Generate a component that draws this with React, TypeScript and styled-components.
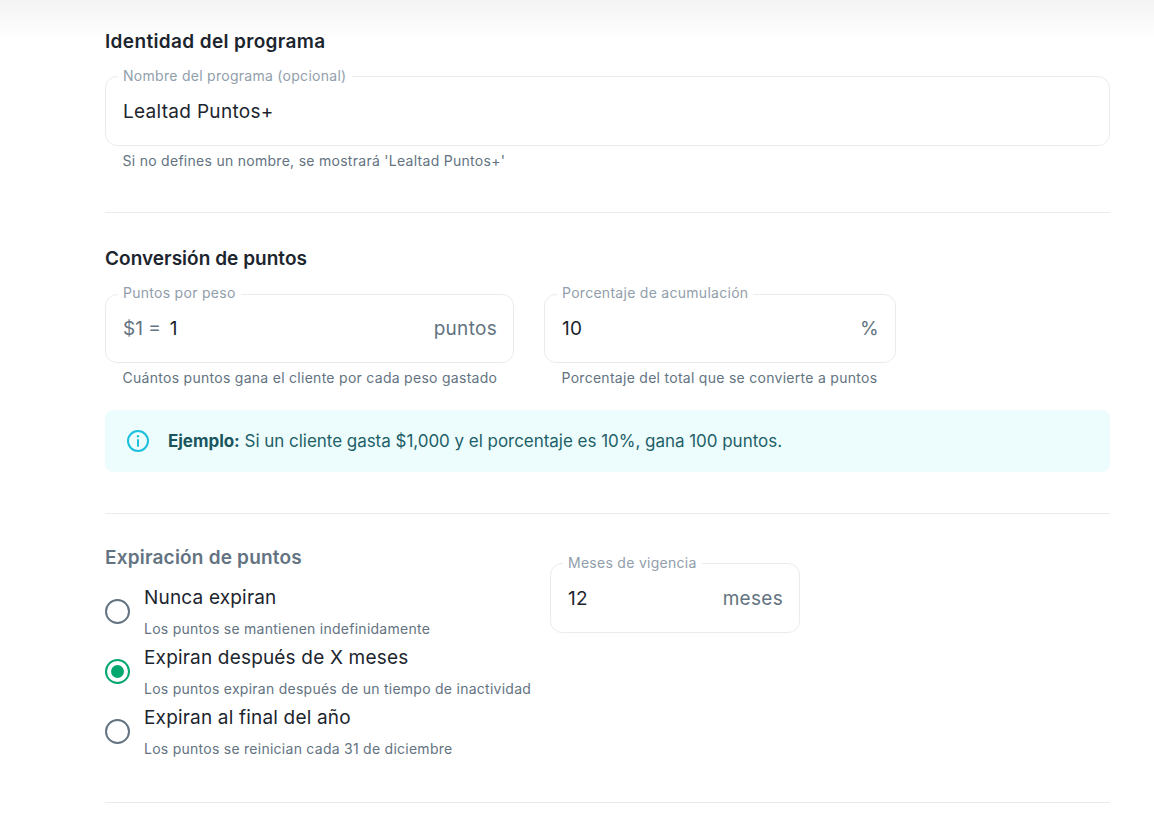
import React from "react";
import styled, { createGlobalStyle } from "styled-components";

const Global = createGlobalStyle`
  html, body { margin: 0; padding: 0; background: #fff; }
  body { font-family: Inter, "Noto Sans", "Liberation Sans", sans-serif; color: #1c252e; }
  * { box-sizing: border-box; }
`;

const Page = styled.main`
  position: relative;
  height: 827px;
  overflow: hidden;
  padding: 30px 44px 0 105px;
`;
const TopShade = styled.div`
  position: absolute;
  inset: 0 0 auto 0;
  height: 40px;
  background: linear-gradient(180deg, #f4f4f5 0%, #ffffff 100%);
`;
const Section = styled.section<{ $h: number; $gap?: number }>`
  position: relative;
  height: ${(p) => p.$h}px;
  border-bottom: 1px solid #e9ecef;
  margin-bottom: ${(p) => p.$gap ?? 0}px;
`;
const Title = styled.h2<{ $muted?: boolean; $ls?: number }>`
  margin: 0 0 -2px;
  font-size: 19px;
  line-height: 24px;
  font-weight: 600;
  letter-spacing: ${(p) => p.$ls ?? 0}px;
  color: ${(p) => (p.$muted ? "#637381" : "#1c252e")};
`;
const FieldBox = styled.div<{ $w?: number; $h?: number }>`
  position: relative;
  height: ${(p) => p.$h ?? 70}px;
  width: ${(p) => (p.$w ? `${p.$w}px` : "100%")};
  border: 1px solid #e9ecef;
  border-radius: 12px;
  padding: 0 16px 0 17px;
  display: flex;
  align-items: center;
  font-size: 19px;
  letter-spacing: 0.3px;
  color: #1c252e;
`;
const Legend = styled.span`
  position: absolute;
  top: -9px;
  left: 12px;
  padding: 0 5px;
  background: #fff;
  font-size: 14px;
  line-height: 16px;
  letter-spacing: 0.28px;
  color: #919eab;
`;
const Value = styled.span`
  flex: 1;
`;
const Adorn = styled.span`
  color: #637381;
`;
const Prefix = styled(Adorn)`
  margin-right: 9px;
  letter-spacing: 0;
`;
const Helper = styled.p`
  margin: 6px 0 0;
  padding-left: 17.5px;
  font-size: 14px;
  line-height: 18px;
  letter-spacing: 0.28px;
  color: #637381;
`;
const IdentityField = styled.div`
  margin-top: 24px;
`;
const ConvRow = styled.div`
  display: flex;
  gap: 30px;
  margin-top: 25px;
  ${Legend} {
    top: -10px;
  }
`;
const Alert = styled.div`
  display: flex;
  align-items: center;
  gap: 18px;
  margin-top: 23px;
  height: 62px;
  padding-left: 21px;
  background: #edfdfd;
  border-radius: 8px;
  font-size: 17px;
  letter-spacing: -0.03px;
  color: #1d6068;
  b {
    font-weight: 700;
    color: #1a555e;
  }
`;
const ExpiryRow = styled.div`
  display: flex;
  padding-top: 32px;
`;
const RadioCol = styled.div`
  width: 445px;
`;
const Options = styled.div`
  margin-top: 18px;
`;
const Option = styled.div`
  height: 60px;
  display: flex;
  align-items: flex-start;
  gap: 14px;
`;
const Radio = styled.span<{ $on?: boolean }>`
  flex: none;
  width: 25px;
  height: 25px;
  margin-top: 13px;
  border-radius: 50%;
  border: 2.5px solid ${(p) => (p.$on ? "#00a76f" : "#637381")};
  display: flex;
  align-items: center;
  justify-content: center;
  &::after {
    content: "";
    display: ${(p) => (p.$on ? "block" : "none")};
    width: 13px;
    height: 13px;
    border-radius: 50%;
    background: #00a76f;
  }
`;
const OptionLabel = styled.div`
  font-size: 19px;
  line-height: 24px;
  letter-spacing: 0.18px;
  color: #1c252e;
`;
const OptionDesc = styled.div`
  margin-top: 10px;
  font-size: 14px;
  line-height: 18px;
  letter-spacing: 0.26px;
  color: #637381;
`;
const MonthsField = styled.div`
  margin-top: 17px;
`;

const InfoIcon = () => (
  <svg width="24" height="24" viewBox="0 0 24 24" fill="none" stroke="#1cbfdc" strokeWidth="2" strokeLinecap="round">
    <circle cx="12" cy="12" r="10" />
    <path d="M12 11v6" />
    <path d="M12 7.2v.1" strokeWidth="2.4" />
  </svg>
);

export default function App() {
  return (
    <>
      <Global />
      <Page>
        <TopShade />
        <Section $h={183} $gap={34}>
          <Title $ls={0.36}>Identidad del programa</Title>
          <IdentityField>
            <FieldBox>
              <Legend>Nombre del programa (opcional)</Legend>
              <Value>Lealtad Puntos+</Value>
            </FieldBox>
            <Helper>Si no defines un nombre, se mostrará 'Lealtad Puntos+'</Helper>
          </IdentityField>
        </Section>
        <Section $h={267}>
          <Title $ls={0.03}>Conversión de puntos</Title>
          <ConvRow>
            <div>
              <FieldBox $w={409} $h={69}>
                <Legend>Puntos por peso</Legend>
                <Prefix>$1 =</Prefix>
                <Value>1</Value>
                <Adorn>puntos</Adorn>
              </FieldBox>
              <Helper>Cuántos puntos gana el cliente por cada peso gastado</Helper>
            </div>
            <div>
              <FieldBox $w={352} $h={69}>
                <Legend>Porcentaje de acumulación</Legend>
                <Value>10</Value>
                <Adorn>%</Adorn>
              </FieldBox>
              <Helper>Porcentaje del total que se convierte a puntos</Helper>
            </div>
          </ConvRow>
          <Alert>
            <InfoIcon />
            <span>
              <b>Ejemplo:</b> Si un cliente gasta $1,000 y el porcentaje es 10%, gana 100 puntos.
            </span>
          </Alert>
        </Section>
        <Section $h={289}>
          <ExpiryRow>
            <RadioCol>
              <Title $muted $ls={0.2}>Expiración de puntos</Title>
              <Options>
                <Option>
                  <Radio />
                  <div>
                    <OptionLabel>Nunca expiran</OptionLabel>
                    <OptionDesc>Los puntos se mantienen indefinidamente</OptionDesc>
                  </div>
                </Option>
                <Option>
                  <Radio $on />
                  <div>
                    <OptionLabel>Expiran después de X meses</OptionLabel>
                    <OptionDesc>Los puntos expiran después de un tiempo de inactividad</OptionDesc>
                  </div>
                </Option>
                <Option>
                  <Radio />
                  <div>
                    <OptionLabel>Expiran al final del año</OptionLabel>
                    <OptionDesc>Los puntos se reinician cada 31 de diciembre</OptionDesc>
                  </div>
                </Option>
              </Options>
            </RadioCol>
            <MonthsField>
              <FieldBox $w={250}>
                <Legend>Meses de vigencia</Legend>
                <Value>12</Value>
                <Adorn>meses</Adorn>
              </FieldBox>
            </MonthsField>
          </ExpiryRow>
        </Section>
      </Page>
    </>
  );
}
